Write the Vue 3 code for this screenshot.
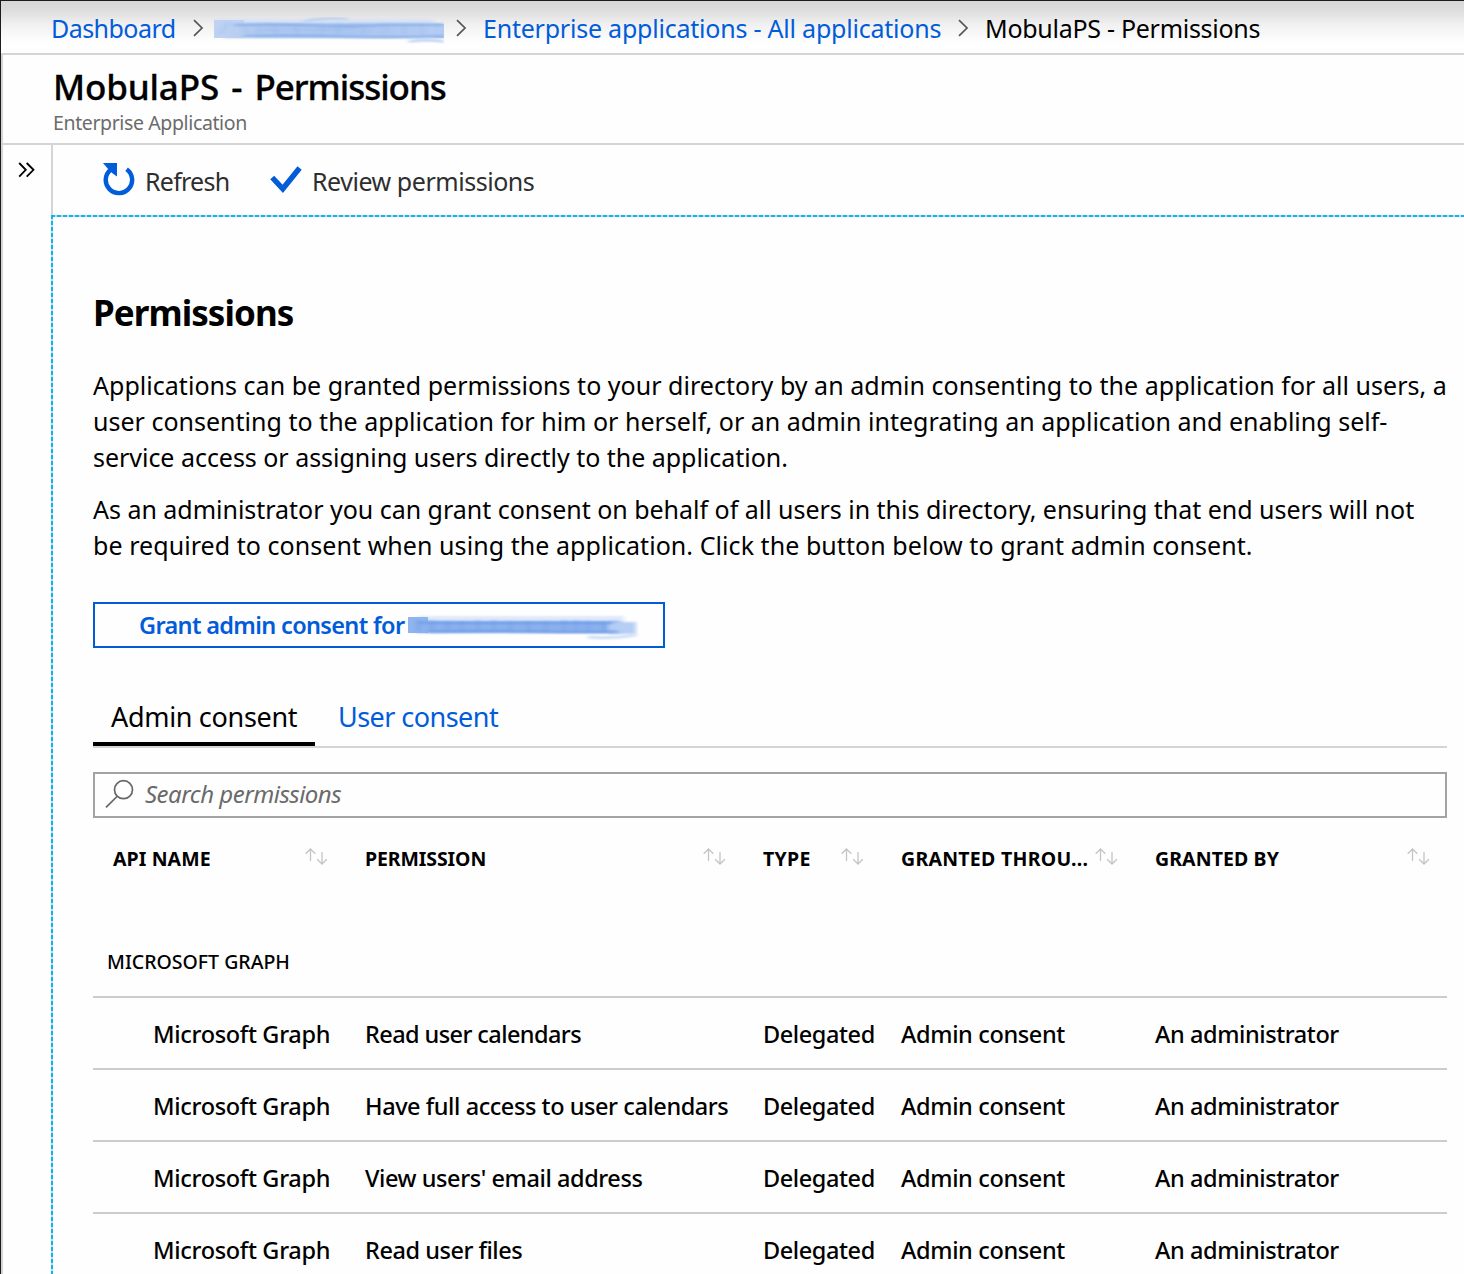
<script setup>
const columns = [
  { label: 'API NAME', cls: 'h-api' },
  { label: 'PERMISSION', cls: 'h-perm' },
  { label: 'TYPE', cls: 'h-type' },
  { label: 'GRANTED THROU...', cls: 'h-through' },
  { label: 'GRANTED BY', cls: 'h-by' },
]
const rows = [
  { permission: 'Read user calendars', cls: 'p1' },
  { permission: 'Have full access to user calendars', cls: 'p2' },
  { permission: "View users' email address", cls: 'p3' },
  { permission: 'Read user files', cls: 'p4' },
]
</script>

<template>
  <div class="portal">
    <nav class="breadcrumb">
      <a class="crumb c1">Dashboard</a>
      <svg class="chev" width="12" height="18" viewBox="0 0 12 18"><path d="M2 1.200 10 9 2 16.800" /></svg>
      <svg class="smudge s-top" width="230" height="28" viewBox="0 0 230 28">
        <defs>
          <linearGradient id="topFade" x1="0" x2="1">
            <stop offset="0" stop-color="#bdd1f3" />
            <stop offset=".18" stop-color="#aec8f0" />
            <stop offset=".6" stop-color="#a9c5f0" />
            <stop offset="1" stop-color="#b6cdf3" />
          </linearGradient>
          <filter id="soft" x="-5%" y="-30%" width="110%" height="160%"><feGaussianBlur stdDeviation="2.500 .8" /></filter>
        </defs>
        <path d="M0 2H220V12H0z" fill="#d8e2f4" filter="url(#soft)" />
        <path d="M0 3H30V21H0z" fill="#bfd2f3" />
        <path d="M10 6H230V21H10z" fill="url(#topFade)" filter="url(#soft)" />
        <path d="M220 7H230V21H220z" fill="#b3caf2" />
        <g fill="none" filter="url(#soft)">
          <path d="M20 8Q60 7 100 8.500T170 8H230M30 19Q80 18 130 19.500T230 19" stroke="#7fa8e8" stroke-width="1.600" />
          <path d="M75 12Q110 15 145 10M90 4Q110 0 134 2M45 13H75" stroke="#9dbcec" stroke-width="1.200" />
          <path d="M6 18 14 5M28 7 34 17M44 7V17M58 6 62 17M82 7V17M108 7V17M124 6V17M150 7V17M172 6V17M190 6V17M208 8V18" stroke="#8fb2ec" stroke-width="2" opacity=".5" />
          <path d="M195 24.500Q212 22 230 24.500" stroke="#a8c5f3" stroke-width="1.800" />
        </g>
      </svg>
      <svg class="chev" width="12" height="18" viewBox="0 0 12 18"><path d="M2 1.200 10 9 2 16.800" /></svg>
      <a class="crumb c2">Enterprise applications - All applications</a>
      <svg class="chev" width="12" height="18" viewBox="0 0 12 18"><path d="M2 1.200 10 9 2 16.800" /></svg>
      <span class="crumb c3">MobulaPS - Permissions</span>
    </nav>

    <div class="blade">
      <header class="title-bar">
        <h1>MobulaPS - <span>Permissions</span></h1>
        <div class="subtitle"><span>Enterprise Application</span></div>
      </header>

      <div class="blade-body">
        <aside class="rail">
          <svg width="18" height="16" viewBox="0 0 18 16"><path d="M1.200 1 7.800 7.800 1.200 14.600M8.700 1 15.500 7.800 8.700 14.600" fill="none" stroke="#000" stroke-width="1.800" /></svg>
        </aside>

        <div class="main">
          <div class="commands">
            <button class="cmd">
              <svg width="32" height="33" viewBox="0 0 32 33">
                <path d="M23.600 6.200A13.200 13.200 0 1 1 7.600 6.700" fill="none" stroke="#015cda" stroke-width="4.400" />
                <path d="M0 0H14V13.500L9.700 10.400 5.500 6.500z" fill="#015cda" />
              </svg>
              <span class="k1">Refresh</span>
            </button>
            <button class="cmd review">
              <svg width="32" height="28" viewBox="0 0 32 28"><path d="M2.200 11.500 12.800 22.800 29.600 2" fill="none" stroke="#015cda" stroke-width="5.400" /></svg>
              <span class="k2">Review permissions</span>
            </button>
          </div>

          <main class="content">
            <h2><span>Permissions</span></h2>
            <p class="para first">
              <span class="l1">Applications can be granted permissions to your directory by an admin consenting to the application for all users, a</span><br>
              <span class="l2">user consenting to the application for him or herself, or an admin integrating an application and enabling self-</span><br>
              <span class="l3">service access or assigning users directly to the application.</span>
            </p>
            <p class="para">
              <span class="l4">As an administrator you can grant consent on behalf of all users in this directory, ensuring that end users will not</span><br>
              <span class="l5">be required to consent when using the application. Click the button below to grant admin consent.</span>
            </p>

            <button class="grant">
              <span>Grant admin consent for</span>
              <svg class="smudge" width="232" height="28" viewBox="0 0 232 28">
                <path d="M10 2H216V12H10z" fill="#dfe9fa" filter="url(#soft)" />
                <path d="M0 3H20V19H0z" fill="#8fb4ee" />
                <path d="M8 7H212V19H8z" fill="#8bb1ed" filter="url(#soft)" />
                <path d="M200 8H228V20H200z" fill="#b5cef5" filter="url(#soft)" />
                <g fill="none" filter="url(#soft)">
                  <path d="M10 8.500Q60 9 110 9T205 9M20 17.500Q80 16.500 130 17.500T210 17.500" stroke="#6f9de8" stroke-width="1.800" />
                  <path d="M10 6V17M24 6V17M40 7V17M54 7V17M70 6V17M86 6V17M102 7V17M120 7V17M138 7V17M156 6V17M168 6V17M180 7V17M196 8V19" stroke="#6a9ae8" stroke-width="2.500" opacity=".6" />
                  <path d="M180 23Q205 25 228 21" stroke="#c4d8f7" stroke-width="2.500" />
                </g>
              </svg>
            </button>

            <div class="tabs">
              <div class="tab active"><span class="t1">Admin consent</span></div>
              <div class="tab"><span class="t2">User consent</span></div>
            </div>

            <div class="search">
              <svg width="30" height="30" viewBox="0 0 30 30" fill="none" stroke="#666" stroke-width="1.700"><circle cx="18.500" cy="10.700" r="9" /><path d="M12 17.500 1 28.300" /></svg>
              <span>Search permissions</span>
            </div>

            <div class="grid head">
              <div v-for="c in columns" :key="c.label" class="cell">
                <span :class="c.cls">{{ c.label }}</span>
                <svg width="23" height="17" viewBox="0 0 23 17" fill="none" stroke="#c4c4c4" stroke-width="1.300"><path d="M5.500 13V1M.700 5.700 5.500 1 10.300 5.700M17 4V16M12.200 11.300 17 16 21.800 11.300" /></svg>
              </div>
            </div>
            <div class="group"><span>MICROSOFT GRAPH</span></div>
            <div v-for="r in rows" :key="r.permission" class="grid row">
              <div class="api"><span class="d-api">Microsoft Graph</span></div>
              <div><span :class="r.cls">{{ r.permission }}</span></div>
              <div><span class="d-type">Delegated</span></div>
              <div><span class="d-through">Admin consent</span></div>
              <div><span class="d-by">An administrator</span></div>
            </div>
          </main>
        </div>
      </div>
    </div>
  </div>
</template>

<style>
body { margin: 0; background: #fff; }
</style>

<style scoped>
* { box-sizing: border-box; }
.portal {
  width: 1464px; height: 1274px; overflow: hidden;
  border-top: 1px solid #1f1b1d; border-left: 1px solid #1f1b1d;
  background: #fefefe; color: #000;
  font-family: "Noto Sans", "Open Sans", sans-serif;
  white-space: nowrap;
}
svg { display: block; flex: none; }
button { font: inherit; color: inherit; background: none; border: 0; padding: 0; text-align: left; }
.breadcrumb {
  height: 54px; border-bottom: 2px solid #d5d5d5; padding-left: 50px;
  display: flex; align-items: flex-start;
  background: linear-gradient(#d8d7d8 0, #dfdedf 10px, #f1f1f1 24px, #fcfcfc 38px, #fefefe 42px);
  font-size: 25px; line-height: 36px;
}
.crumb { padding-top: 9px; flex: none; }
a.crumb { color: #015cda; }
.c1 { width: 141px; letter-spacing: -.55px; }
.c2 { width: 474px; letter-spacing: -.22px; }
.c3 { letter-spacing: -.28px; }
.chev { margin-top: 18px; fill: none; stroke: #555; stroke-width: 1.700; }
.s-top { margin: 16px 11px 0 10px; }
.chev + .c2 { margin-left: 16px; }
.chev + .c3 { margin-left: 16px; }
.blade { border-left: 2px solid #d5d5d5; }
.title-bar { height: 90px; border-bottom: 2px solid #d5d5d5; padding: 7px 0 0 50px; }
h1 { margin: 0; font-size: 35px; line-height: 50px; font-weight: 500; letter-spacing: -.15px; word-spacing: 3.200px; -webkit-text-stroke: .3px #000; }
h1 span { letter-spacing: -1.020px; }
.subtitle { font-size: 19.500px; line-height: 22px; color: #6b6b6b; letter-spacing: -.38px; }
.blade-body { display: flex; height: 1129px; }
.rail { width: 48px; padding: 17px 0 0 15px; }
.main { flex: 1; min-width: 0; display: flex; flex-direction: column; }
.commands { height: 70px; flex: none; border-left: 2px solid #d5d5d5; padding-left: 50px; display: flex; font-size: 25px; line-height: 36px; color: #2e2e2e; }
.cmd { display: flex; align-items: flex-start; width: 167px; }
.cmd svg { margin-top: 18px; }
.cmd span { margin: 18px 0 0 10px; }
.k1 { letter-spacing: -.75px; }
.k2 { letter-spacing: -.46px; }
.cmd.review svg { margin-top: 21px; }
.content {
  flex: 1; padding: 2px 17px 0 42px;
  background:
    repeating-linear-gradient(90deg, #00bcf2 0 4px, #d5d5d5 4px 6px) 0 0 / 100% 2px no-repeat,
    repeating-linear-gradient(#00bcf2 0 4px, #d5d5d5 4px 6px) 0 0 / 2px 100% no-repeat;
}
h2 { margin: 71px 0 0; font-size: 35px; line-height: 50px; font-weight: 700; letter-spacing: -.93px; }
.para { margin: 16px 0 0; font-size: 25px; line-height: 36px; }
.para.first { margin-top: 29px; }
.l1 { letter-spacing: .03px; }
.l2 { letter-spacing: .01px; }
.l3 { letter-spacing: -.03px; }
.l4 { letter-spacing: -.02px; }
.l5 { letter-spacing: .06px; }
.grant {
  margin-top: 39px; width: 572px; height: 46px; border: 2px solid #015cda; padding-left: 44px;
  display: flex; color: #015cda; font-size: 23.500px; line-height: 42px; font-weight: 600;
}
.grant span { width: 269px; flex: none; letter-spacing: -.66px; }
.grant svg { margin-top: 10px; }
.tabs { margin-top: 50px; height: 50px; border-bottom: 2px solid #d5d5d5; display: flex; font-size: 27px; line-height: 37px; }
.tab { height: 48px; padding: 0 0 0 23px; color: #015cda; }
.tab.active { width: 222px; padding-left: 18px; color: #000; border-bottom: 4px solid #000; }
.t1 { letter-spacing: -.32px; }
.t2 { letter-spacing: -.54px; }
.search { margin-top: 24px; height: 46px; border: 2px solid #a3a3a3; padding-left: 10px; display: flex; color: #6a6a6a; font-size: 24px; line-height: 39px; font-style: italic; }
.search svg { margin-top: 5px; }
.search span { margin-left: 10px; letter-spacing: -.5px; }
.grid { display: grid; grid-template-columns: 272px 398px 138px 254px 292px; }
.head { height: 104px; padding-top: 27px; font-size: 19.500px; line-height: 28px; font-weight: 700; }
.cell { display: flex; justify-content: space-between; padding-right: 37px; height: 28px; }
.cell span { width: 0; flex: none; }
.cell:first-child { padding-left: 20px; }
.cell:last-child { padding-right: 17px; }
.cell svg { margin-top: 3px; }
.h-api, .h-by { letter-spacing: .1px; }
.h-perm { letter-spacing: -.1px; }
.h-type { letter-spacing: .3px; }
.h-through { letter-spacing: .27px; }
.group { height: 76px; padding: 26px 0 0 14px; border-bottom: 2px solid #ccc; font-size: 19.500px; line-height: 28px; font-weight: 500; }
.row { height: 72px; border-bottom: 2px solid #ccc; font-size: 23.500px; line-height: 73px; font-weight: 500; }
.api { padding-left: 60px; }
.d-api { letter-spacing: -.32px; }
.p1 { letter-spacing: -.58px; }
.p2 { letter-spacing: -.43px; }
.p3 { letter-spacing: -.42px; }
.p4 { letter-spacing: -.46px; }
.d-type { letter-spacing: -.42px; }
.d-through { letter-spacing: -.36px; }
.d-by { letter-spacing: -.42px; }
</style>
